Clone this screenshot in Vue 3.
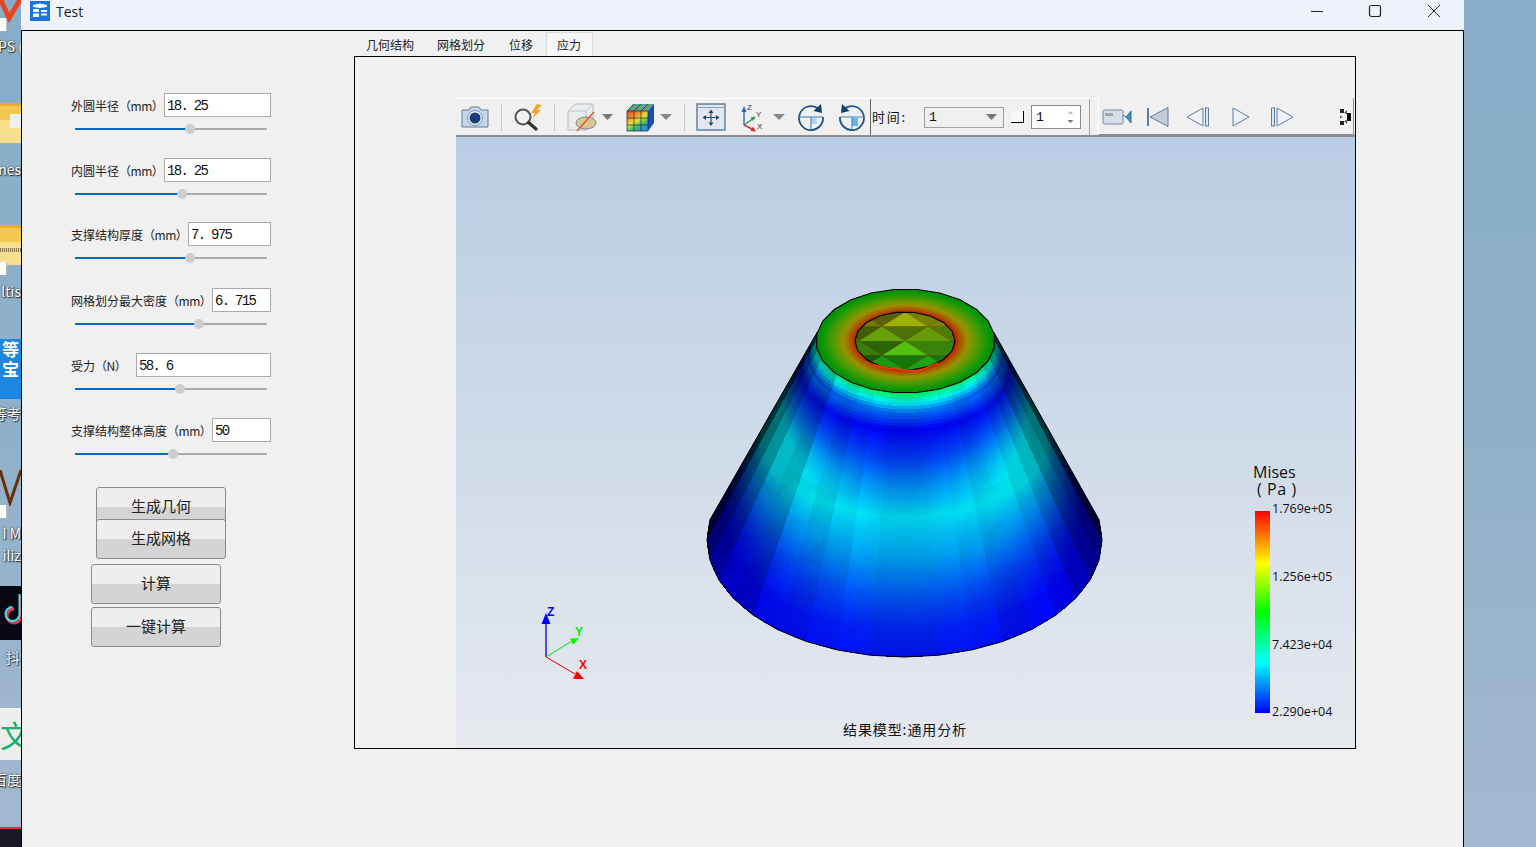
<script setup>
const fields = [
  { label: "外圆半径", unit: "（mm）", value: "18. 25", inputW: 107, handle: 115 },
  { label: "内圆半径", unit: "（mm）", value: "18. 25", inputW: 107, handle: 107 },
  { label: "支撑结构厚度", unit: "（mm）", value: "7. 975", inputW: 83, handle: 115 },
  { label: "网格划分最大密度", unit: "（mm）", value: "6. 715", inputW: 59, handle: 124 },
  { label: "受力", unit: "（N）", value: "58. 6", inputW: 135, handle: 105 },
  { label: "支撑结构整体高度", unit: "（mm）", value: "50", inputW: 59, handle: 98 },
];
const tabs = ["几何结构", "网格划分", "位移", "应力"];

const legendLabels = ["1.769e+05", "1.256e+05", "7.423e+04", "2.290e+04"];

// jet colour scale, v from 0 to 1
function jet(v) {
  v = Math.max(0, Math.min(1, v));
  let r = 0, g = 0, b = 0;
  if (v < 0.25) { g = v / 0.25; b = 1; }
  else if (v < 0.5) { g = 1; b = 1 - (v - 0.25) / 0.25; }
  else if (v < 0.75) { r = (v - 0.5) / 0.25; g = 1; }
  else { r = 1; g = 1 - (v - 0.75) / 0.25; }
  return [r, g, b];
}

function lerpTable(table, t) {
  for (let i = 1; i < table.length; i++) {
    if (t <= table[i][0]) {
      const k = (t - table[i - 1][0]) / (table[i][0] - table[i - 1][0]);
      return table[i - 1][1] + k * (table[i][1] - table[i - 1][1]);
    }
  }
  return table[table.length - 1][1];
}

const centerTable = [
  [0, 0.42], [0.03, 0.29], [0.08, 0.1], [0.14, 0], [0.25, 0.06], [0.35, 0.14],
  [0.47, 0.225], [0.62, 0.17], [0.77, 0.09], [0.9, 0.035], [1, 0.02],
];

function hash(a, b) {
  const s = Math.sin(a * 127.1 + b * 311.7) * 43758.5453;
  return s - Math.floor(s);
}

function rgb(c, s) {
  return "rgb(" + c.map((x) => Math.round(Math.min(1, x * s) * 255)).join(",") + ")";
}

// cone seen from above, angle 0 is the front of the cone
function conePoint(th, t) {
  const cx = 905.5 - t;
  const cy = 341 + t * 199;
  const rx = 89.5 + t * 108;
  const ry = 52 + t * 65;
  return [cx + rx * Math.sin(th), cy + ry * Math.cos(th)];
}

const deg = Math.PI / 180;
const edge = 100 * deg;
const coneCells = [];
const thStep = 2.5 * deg;
const tStep = 0.0125;
for (let i = -40; i < 40; i++) {
  for (let j = 0; j < 80; j++) {
    const th = i * thStep;
    const t = j * tStep;
    const thMid = th + thStep / 2;
    const tMid = t + tStep / 2;
    const a = Math.min(1, Math.abs(Math.sin(thMid)));
    let v = lerpTable(centerTable, tMid);
    // the cyan area spreads upward along the sides
    v += a * a * 0.12 * Math.exp(-Math.pow((tMid - 0.34) / 0.15, 2));
    v -= a * a * 0.07 * Math.exp(-Math.pow((tMid - 0.75) / 0.25, 2));
    if (tMid > 0.1) v = Math.min(v, 0.235);
    if (tMid < 0.08) v -= a * 0.07;
    const fi = Math.floor(thMid / (10 * deg));
    const fj = Math.floor(tMid * 7);
    const upper = (thMid / (10 * deg) - fi) + (tMid * 7 - fj) > 1 ? 1 : 0;
    const facetTh = (fi + 0.5) * 10 * deg;
    const c = Math.max(0, Math.cos(facetTh));
    let shade = 0.2 + 0.8 * Math.pow(c, 0.5);
    // each strip of faces has its own brightness
    shade *= 0.92 + 0.16 * hash(fi, 7) * Math.min(1, a * 1.6);
    shade *= 0.97 + 0.06 * hash(fi + upper * 3, fj) * Math.min(1, a * 1.6);
    coneCells.push({
      key: i + "_" + j,
      order: Math.abs(thMid),
      fill: rgb(jet(v), shade),
      points: [conePoint(th, t), conePoint(th + thStep, t), conePoint(th + thStep, t + tStep), conePoint(th, t + tStep)]
        .map((p) => p[0].toFixed(1) + "," + p[1].toFixed(1)).join(" "),
    });
  }
}
coneCells.sort((p, q) => q.order - p.order);

function ellipsePoints(cx, cy, rx, ry, n, phase) {
  const out = [];
  for (let i = 0; i < n; i++) {
    const th = phase + (i * 2 * Math.PI) / n;
    out.push(cx + rx * Math.sin(th) + "," + (cy + ry * Math.cos(th)));
  }
  return out.join(" ");
}
const ringOuter = ellipsePoints(905.5, 341, 89.5, 52, 24, 0.13);
const holePts = ellipsePoints(905, 341, 50, 29, 18, 0.17);

// outline of bottom and slanted sides
const outlinePts = [];
for (let d = -100; d <= 100; d += 10) {
  const p = conePoint(d * deg + 0, 1);
  outlinePts.push(p[0].toFixed(1) + "," + p[1].toFixed(1));
}
const leftTop = conePoint(-edge, 0);
const rightTop = conePoint(edge, 0);
const coneOutline = leftTop.join(",") + " " + outlinePts.join(" ") + " " + rightTop.join(",");

// diamonds seen through the hole
const holeTris = [];
const dx = 46;
const dy = 14.5;
for (let r = 0; r < 5; r++) {
  const y0 = 312 + r * dy;
  const off = r % 2 ? dx / 2 : 0;
  for (let k = -3; k <= 3; k++) {
    const x0 = 905 + k * dx + off;
    const m = (r + 0.5) / 4;
    const side = 1 - Math.min(0.35, Math.abs(x0 - 905) / 150);
    const base = [0.62 - Math.min(1, m) * 0.58, 0.62, 0.02 + Math.min(1, m) * 0.05];
    holeTris.push({
      key: "u" + r + k,
      points: `${x0},${y0} ${x0 + dx / 2},${y0 + dy} ${x0 - dx / 2},${y0 + dy}`,
      fill: rgb(base, (1.12 + 0.12 * hash(r, k)) * side),
    });
    holeTris.push({
      key: "d" + r + k,
      points: `${x0},${y0} ${x0 + dx},${y0} ${x0 + dx / 2},${y0 + dy}`,
      fill: rgb(base, (0.82 + 0.12 * hash(k, r)) * side),
    });
  }
}
</script>

<template>
  <div class="desktop">
    <div class="desk-icons">
      <svg class="desk-v" width="21" height="24" viewBox="0 0 21 24"><path d="M0 0 L9 20 L21 0" fill="none" stroke="#ea4320" stroke-width="5" /></svg>
      <span class="shortcut s1"></span>
      <span class="desk-text t1">PS (</span>
      <span class="folder f1"><i class="paper"></i></span>
      <span class="desk-text t2">nes</span>
      <span class="folder f2"><i class="zip"></i></span>
      <span class="shortcut s2"></span>
      <span class="desk-text t3">ltis</span>
      <span class="blue-tile">等<br />宝</span>
      <span class="desk-text t4">等考</span>
      <svg class="desk-brown" width="21" height="36" viewBox="0 0 21 36"><path d="M0 0 L10 33 L21 0" fill="none" stroke="#6b2f08" stroke-width="3" /></svg>
      <span class="shortcut s3"></span>
      <span class="desk-text t5">I M</span>
      <span class="desk-text t6">iliz</span>
      <span class="tiktok">
        <svg width="21" height="54" viewBox="0 0 21 54"><path d="M21 10 V30 a7 7 0 1 1 -7 -7" fill="none" stroke="#f0355a" stroke-width="3" /><path d="M19.500 8 V28 a7 7 0 1 1 -7 -7" fill="none" stroke="#3fe6e6" stroke-width="2" /></svg>
      </span>
      <span class="desk-text t7">抖</span>
      <span class="wen-tile">文</span>
      <span class="desk-text t8">百度</span>
      <span class="dark-tile"></span>
    </div>

    <div class="window">
      <header class="titlebar">
        <svg class="app-icon" width="20" height="20" viewBox="0 0 20 20">
          <rect width="20" height="20" fill="#1a73e0" />
          <path d="M3 4 L10 2.500 L17 4 V6 L10 7 L3 6 Z M3 8 H9 V11 H3 Z M3 12.500 H9 V16 H3 Z M11 9 H17 V11 H11 Z M11 12.500 H17 V14.500 H11 Z" fill="#fff" />
        </svg>
        <span class="title">Test</span>
        <div class="win-controls">
          <svg width="14" height="14" viewBox="0 0 14 14"><path d="M1 7.500 H13" stroke="#222" /></svg>
          <svg width="14" height="14" viewBox="0 0 14 14"><rect x="1.500" y="1.500" width="11" height="11" rx="2" fill="none" stroke="#222" stroke-width="1.200" /></svg>
          <svg class="win-close" width="14" height="14" viewBox="0 0 14 14"><path d="M1 1 L13 13 M13 1 L1 13" stroke="#222" /></svg>
        </div>
      </header>

      <div class="body">
        <aside class="panel">
          <div v-for="f in fields" :key="f.label" class="field">
            <div class="field-top">
              <label class="field-label">{{ f.label }}<span class="unit">{{ f.unit }}</span></label>
              <input class="field-input" :value="f.value" :style="{ width: f.inputW + 'px' }" />
            </div>
            <div class="slider">
              <div class="slider-fill" :style="{ width: f.handle + 'px' }"></div>
              <div class="slider-handle" :style="{ left: f.handle + 'px' }"></div>
            </div>
          </div>
          <button class="btn btn-a">生成几何</button>
          <button class="btn btn-a overlap">生成网格</button>
          <button class="btn btn-b calc">计算</button>
          <button class="btn btn-b all">一键计算</button>
        </aside>

        <main class="main">
          <nav class="tabs">
            <div v-for="t in tabs" :key="t" class="tab" :class="{ active: t === '应力' }">{{ t }}</div>
          </nav>
          <section class="frame">
            <div class="viewer">
              <div class="toolbar">
                <svg class="ml4" width="30" height="24" viewBox="0 0 30 24">
                  <path d="M2 5 H9 L11 2 H19 L21 5 H28 V22 H2 Z" fill="#c6d6e6" stroke="#5f7fa0" stroke-linejoin="round" />
                  <circle cx="15" cy="13" r="7.500" fill="#e6eef6" stroke="#7c98b4" />
                  <circle cx="15" cy="13" r="5.500" fill="#1c3c78" />
                </svg>
                <span class="sep ml11"></span>
                <svg class="ml10" width="32" height="28" viewBox="0 0 32 28">
                  <circle cx="11" cy="14" r="7.500" fill="#eef2f4" stroke="#555" stroke-width="2" />
                  <path d="M16.500 19.500 L24 26" stroke="#333" stroke-width="3.200" stroke-linecap="round" />
                  <path d="M25 1 L19 10 H23 L20 16 L29 7 H25 L30 2 Z" fill="#f2a524" />
                </svg>
                <span class="sep ml10"></span>
                <svg class="ml11" width="31" height="30" viewBox="0 0 31 30">
                  <path d="M2 9 L9 2 H27 V20 L20 28 H2 Z" fill="#e9ecef" stroke="#b4bcc4" />
                  <path d="M2 9 H20 V28 M20 9 L27 2" fill="none" stroke="#c0c6cc" />
                  <ellipse cx="20" cy="21" rx="10" ry="6" fill="#d9c690" stroke="#7a8894" />
                  <path d="M11 29 L28 10" stroke="#d5552a" stroke-width="1.200" />
                </svg>
                <svg class="ml5" width="11" height="7" viewBox="0 0 11 7"><path d="M0 0 H11 L5.500 6 Z" fill="#777" /></svg>
                <svg class="ml12" width="30" height="29" viewBox="0 0 30 29">
                  <defs>
                    <linearGradient id="cubeFace" x1="0" y1="0" x2="0.6" y2="1">
                      <stop offset="0" stop-color="#e0392a" />
                      <stop offset="0.35" stop-color="#f0a024" />
                      <stop offset="0.55" stop-color="#e4e03a" />
                      <stop offset="0.78" stop-color="#3fc46a" />
                      <stop offset="1" stop-color="#2f8fe0" />
                    </linearGradient>
                  </defs>
                  <path d="M8 1 H29 L23 8 H2 Z" fill="#5fa08a" />
                  <path d="M23 8 L29 1 V20 L23 28 Z" fill="#1a4fb0" />
                  <rect x="2" y="8" width="21" height="20" fill="url(#cubeFace)" />
                  <path d="M2 8 H23 V28 H2 Z M9 8 V28 M16 8 V28 M2 15 H23 M2 22 H23 M9 1 L2 8 M16 1 L9 8 M23 1 L16 8" fill="none" stroke="#223" stroke-width="0.700" />
                </svg>
                <svg class="ml5" width="12" height="7" viewBox="0 0 12 7"><path d="M0 0 H12 L6 6 Z" fill="#888" /></svg>
                <span class="sep ml12"></span>
                <svg class="ml11" width="30" height="28" viewBox="0 0 30 28">
                  <rect x="1" y="1" width="28" height="26" fill="#e3e6ec" stroke="#62809f" stroke-width="1.500" />
                  <path d="M1 4.500 H29" stroke="#8aa0b8" />
                  <path d="M15 8 V21 M9 14.500 H21" stroke="#2d4f78" stroke-width="1.200" />
                  <path d="M15 6.500 L12.500 10 H17.500 Z M15 23 L12.500 19.500 H17.500 Z M6.500 14.500 L10 12 V17 Z M23.500 14.500 L20 12 V17 Z" fill="#24466f" />
                </svg>
                <svg class="ml15" width="26" height="30" viewBox="0 0 26 30">
                  <path d="M3 8 V23" stroke="#2a62c4" stroke-width="1.400" />
                  <path d="M3 4 L0.500 10 H5.500 Z" fill="#2a62c4" />
                  <path d="M3 23 L13 16" stroke="#2a9a4c" stroke-width="1.400" />
                  <path d="M15 14.500 L9.500 15.500 L12 19 Z" fill="#2a9a4c" />
                  <path d="M3 23 L13 28" stroke="#d83030" stroke-width="1.400" />
                  <path d="M15 29.500 L9.500 29 L12 24.500 Z" fill="#d83030" />
                  <text x="6" y="8" class="axis-small">Z</text>
                  <text x="15" y="15" class="axis-small">Y</text>
                  <text x="16" y="27" class="axis-small">X</text>
                </svg>
                <svg class="ml6" width="12" height="7" viewBox="0 0 12 7"><path d="M0 0 H12 L6 6 Z" fill="#888" /></svg>
                <svg class="ml12" width="28" height="28" viewBox="0 0 28 28">
                  <path d="M14 15 H20 V21 H14 Z" fill="#b5d4ee" />
                  <path d="M20.500 5 A12 12 0 1 0 26 14" fill="none" stroke="#23527f" stroke-width="1.800" />
                  <path d="M2 14 H26 M14 14 V26" stroke="#3a80b4" stroke-width="1" />
                  <path d="M24 1 L25 10 L16.500 8 Z" fill="#183f68" />
                </svg>
                <svg class="ml13" width="28" height="28" viewBox="0 0 28 28">
                  <path d="M14 15 H20 V23 H14 Z" fill="#6fb4e8" />
                  <path d="M7.500 5 A12 12 0 1 1 2 14" fill="none" stroke="#23527f" stroke-width="1.800" />
                  <path d="M2 14 H26 M14 14 V26" stroke="#3a80b4" stroke-width="1" />
                  <path d="M4 1 L3 10 L11.500 8 Z" fill="#183f68" />
                </svg>
                <span class="sep dark ml4"></span>
                <span class="time-label">时间:</span>
                <div class="combo">
                  <span>1</span>
                  <svg width="11" height="6" viewBox="0 0 11 6"><path d="M0 0 H11 L5.500 6 Z" fill="#777" /></svg>
                </div>
                <span class="check"></span>
                <div class="spin">
                  <span>1</span>
                  <svg width="7" height="14" viewBox="0 0 7 14"><path d="M3.500 1 L6.500 4 H0.500 Z" fill="#c0c0c0" /><path d="M3.500 13 L6.500 10 H0.500 Z" fill="#777" /></svg>
                </div>
                <span class="sep gray ml8"></span>
                <div class="player">
                  <svg class="ml3" width="30" height="18" viewBox="0 0 30 18">
                    <rect x="1" y="2" width="20" height="14" rx="1.500" fill="#d7dee6" stroke="#6f8aa6" />
                    <rect x="3" y="5" width="8" height="3" fill="#9aa8b6" />
                    <path d="M21 7 L24 9 L29 3 V15 L24 9" fill="#3d92c4" stroke="#2e6f9c" />
                  </svg>
                  <svg class="ml14" width="23" height="22" viewBox="0 0 23 22">
                    <path d="M2 2 V20" stroke="#5d7da0" stroke-width="2" />
                    <path d="M22 1.500 V20.500 L4 11 Z" fill="#c4ccd6" stroke="#5d7da0" />
                  </svg>
                  <svg class="ml17" width="24" height="22" viewBox="0 0 24 22">
                    <path d="M17 2 V20 L1 11 Z" fill="#eef1f5" stroke="#5d7da0" />
                    <rect x="19.500" y="2" width="3" height="18" fill="#dde4ec" stroke="#5d7da0" />
                  </svg>
                  <svg class="ml21" width="20" height="22" viewBox="0 0 20 22">
                    <path d="M2 2 V20 L18 11 Z" fill="#eef1f5" stroke="#5d7da0" />
                  </svg>
                  <svg class="ml19" width="24" height="22" viewBox="0 0 24 22">
                    <rect x="1.500" y="2" width="3" height="18" fill="#dde4ec" stroke="#5d7da0" />
                    <path d="M7 2 V20 L23 11 Z" fill="#eef1f5" stroke="#5d7da0" />
                  </svg>
                  <svg class="ml45" width="12" height="20" viewBox="0 0 12 20">
                    <rect width="12" height="20" fill="#f4f4f4" />
                    <path d="M1 2 H5 V6 H1 Z M1 14 H5 V18 H1 Z" fill="#222" />
                    <path d="M5 6 L8 3 V7 Z M5 14 L8 17 V13 Z" fill="#555" />
                    <path d="M1 8.500 L4 10 L1 11.500 Z" fill="#666" />
                    <rect x="8" y="6" width="4" height="8" fill="#000" />
                  </svg>
                </div>
              </div>

              <div class="canvas">
                <svg class="scene" viewBox="456 137 899 611" width="899" height="611">
                  <defs>
                    <radialGradient id="ringGrad">
                      <stop offset="0.56" stop-color="#b81c00" />
                      <stop offset="0.6" stop-color="#b04800" />
                      <stop offset="0.7" stop-color="#989200" />
                      <stop offset="0.82" stop-color="#4a9c04" />
                      <stop offset="0.95" stop-color="#069606" />
                      <stop offset="1" stop-color="#049004" />
                    </radialGradient>
                    <clipPath id="holeClip"><polygon :points="holePts" /></clipPath>
                  </defs>
                  <polygon :points="coneOutline" fill="#0020c0" />
                  <g shape-rendering="crispEdges">
                    <polygon v-for="c in coneCells" :key="c.key" :points="c.points" :fill="c.fill" />
                  </g>
                  <polyline :points="coneOutline" fill="none" stroke="#000" stroke-width="1" />
                  <polygon :points="ringOuter" fill="url(#ringGrad)" stroke="#000" stroke-width="1.100" />
                  <g clip-path="url(#holeClip)">
                    <polygon v-for="h in holeTris" :key="h.key" :points="h.points" :fill="h.fill" />
                  </g>
                  <polygon :points="holePts" fill="none" stroke="#000" stroke-width="1.100" />
                  <polyline points="874,365 890,368.500 918,371 938,363" fill="none" stroke="#ff3c00" stroke-width="1.300" />

                  <path d="M546 657 V620" stroke="#0000e0" stroke-width="1.300" />
                  <path d="M546 613 L541.500 624 H550.500 Z" fill="#0000ff" />
                  <path d="M546 657 L572 641" stroke="#00e000" stroke-width="1" />
                  <path d="M579 638 L570 638.500 L573 645 Z" fill="#00ff00" />
                  <path d="M546 657 L575 674" stroke="#e00000" stroke-width="1" />
                  <path d="M584 679 L573 679 L577 671 Z" fill="#ff0000" />
                  <text x="547" y="616" class="axis z">Z</text>
                  <text x="575" y="636" class="axis y">Y</text>
                  <text x="579" y="669" class="axis x">X</text>
                </svg>
                <div class="legend">
                  <div class="legend-title">Mises<br /><span class="pa">( Pa )</span></div>
                  <div class="legend-bar"></div>
                  <span v-for="(l, i) in legendLabels" :key="l" class="legend-label" :class="'l' + i">{{ l }}</span>
                </div>
                <div class="caption">结果模型:通用分析</div>
              </div>
            </div>
          </section>
        </main>
      </div>
    </div>
  </div>
</template>

<style>
html, body {
  margin: 0;
  overflow: hidden;
}
</style>

<style scoped>
.desktop {
  position: relative;
  width: 1536px;
  height: 847px;
  overflow: hidden;
  background: linear-gradient(180deg, #88adc8 0%, #8fb0ca 50%, #a4b8cf 100%);
  font-family: "Noto Sans CJK SC", "Liberation Sans", sans-serif;
}
.desk-icons {
  position: absolute;
  left: 0;
  top: 0;
  width: 21px;
  height: 847px;
  overflow: hidden;
}
.desk-icons > * {
  position: absolute;
}
.desk-text {
  color: #fff;
  font-size: 14px;
  line-height: 18px;
  white-space: nowrap;
  right: 0;
  text-shadow: 0 0 2px #222, 1px 1px 1px #333;
}
.t1 { top: 37px; right: auto; left: -2px; }
.t2 { top: 160px; }
.t3 { top: 282px; }
.t4 { top: 404px; }
.t5 { top: 524px; }
.t6 { top: 546px; }
.t7 { top: 648px; right: 1px; }
.t8 { top: 770px; }
.desk-v { top: -2px; left: 0; }
.shortcut {
  left: 0;
  width: 6px;
  height: 13px;
  background: #fff;
  border-right: 1px solid #bbb;
}
.shortcut.s1 { top: 18px; }
.shortcut.s2 { top: 262px; }
.shortcut.s3 { top: 505px; }
.folder {
  left: 0;
  width: 21px;
  height: 37px;
  background: linear-gradient(180deg, #f3c850 0 14px, #f8df8e 14px 100%);
  border-top: 3px solid #e8ad30;
}
.paper {
  position: absolute;
  right: 0;
  top: 8px;
  width: 11px;
  height: 14px;
  background: #eeeeea;
}
.zip {
  position: absolute;
  left: 0;
  right: 0;
  top: 20px;
  height: 4px;
  background: repeating-linear-gradient(90deg, #8a7a50 0 1px, #e0d0a0 1px 2px);
}
.f1 { top: 103px; }
.f2 { top: 225px; }
.blue-tile {
  top: 339px;
  left: 0;
  width: 21px;
  height: 60px;
  background: #1c86e0;
  color: #fff;
  font-size: 17px;
  font-weight: 700;
  line-height: 20px;
  text-align: center;
}
.desk-brown { top: 470px; left: 0; }
.tiktok {
  top: 586px;
  left: 0;
  width: 21px;
  height: 54px;
  background: #070812;
}
.wen-tile {
  top: 708px;
  left: 0;
  width: 21px;
  height: 52px;
  background: #ecefec;
  color: #18b070;
  font-size: 30px;
  line-height: 52px;
  overflow: hidden;
}
.dark-tile {
  top: 827px;
  left: 0;
  width: 21px;
  height: 20px;
  background: #1a1a22;
  border-top: 2px solid #e03040;
}
.window {
  position: relative;
  margin-left: 21px;
  width: 1443px;
  height: 847px;
  display: flex;
  flex-direction: column;
  box-sizing: border-box;
  background: #f0f0f0;
}
.titlebar {
  height: 30px;
  flex: none;
  display: flex;
  align-items: flex-start;
  background: #eef3fb;
  border-bottom: 1px solid #000;
}
.app-icon {
  margin: 1px 0 0 9px;
}
.title {
  margin-left: 6px;
  font-family: "Open Sans", "Liberation Sans", sans-serif;
  font-size: 14px;
  line-height: 23px;
  color: #222;
}
.win-controls {
  margin-left: auto;
  margin-right: 23px;
  margin-top: 4px;
  display: flex;
  gap: 44px;
}
.win-close {
  margin-left: 1px;
}
.body {
  flex: 1;
  display: flex;
  border-left: 1px solid #000;
  border-right: 1px solid #000;
}
.panel {
  width: 332px;
  flex: none;
  box-sizing: border-box;
  padding: 62px 0 0 49px;
  display: flex;
  flex-direction: column;
  align-items: flex-start;
}
.field {
  width: 200px;
  height: 65px;
}
.field:nth-child(2) { height: 64px; }
.field:nth-child(3) { height: 66px; }
.field-top {
  display: flex;
  justify-content: space-between;
  align-items: center;
  height: 24px;
}
.field-label {
  font-size: 12px;
  color: #222;
  white-space: nowrap;
}
.unit {
  letter-spacing: -0.5px;
}
.field-input {
  box-sizing: border-box;
  height: 24px;
  padding: 1px 2px 0;
  border: 1px solid #a9a9a9;
  background: #fff;
  border-radius: 0;
  outline: none;
  font-family: "Liberation Mono", monospace;
  font-size: 14px;
  letter-spacing: -1.7px;
  color: #111;
}
.slider {
  position: relative;
  margin: 11px 0 0 4px;
  width: 192px;
  height: 2px;
  background: #ababab;
}
.slider-fill {
  height: 2px;
  background: #0a69bd;
}
.slider-handle {
  position: absolute;
  top: -4px;
  width: 10px;
  height: 10px;
  margin-left: -5px;
  border-radius: 50%;
  background: #cdcdcd;
}
.btn {
  width: 130px;
  height: 40px;
  padding: 0 0 3px;
  box-sizing: border-box;
  border: 1px solid #8b8b8b;
  border-radius: 3px;
  background: linear-gradient(180deg, #eeeeee 50%, #d4d4d4 50%);
  font-family: "Noto Sans CJK SC", sans-serif;
  font-size: 15px;
  color: #222;
}
.btn-a {
  margin-left: 25px;
  margin-top: 4px;
}
.btn-a.overlap {
  margin-top: -8px;
}
.btn-b {
  margin-left: 20px;
}
.calc { margin-top: 5px; }
.all { margin-top: 3px; }
.main {
  flex: 1;
  display: flex;
  flex-direction: column;
  min-width: 0;
}
.tabs {
  display: flex;
  height: 25px;
  padding-left: 0.5px;
}
.tab {
  padding: 0 11.5px;
  font-size: 12px;
  line-height: 28px;
  color: #222;
}
.tab:nth-child(3) { margin: 0 1px; }
.tab.active {
  margin-top: 1px;
  background: #f6f6f6;
  border: 1px solid #dcdcdc;
  border-bottom: none;
  box-sizing: border-box;
  padding: 0 10.5px;
  line-height: 23px;
}
.frame {
  box-sizing: border-box;
  width: 1002px;
  height: 693px;
  border: 1px solid #000;
  padding: 41px 0 0 101px;
  background: #f0f0f0;
}
.viewer {
  height: 100%;
  display: flex;
  flex-direction: column;
}
.toolbar {
  height: 39px;
  flex: none;
  box-sizing: border-box;
  display: flex;
  align-items: center;
  background: #f0f0f0;
  border-top: 1px solid #fff;
  border-bottom: 2px solid #8e8e8e;
}
.toolbar > svg, .player > svg {
  flex: none;
}
.sep {
  width: 1px;
  height: 27px;
  background: #c8c8c8;
  flex: none;
}
.sep.dark {
  height: 36px;
  background: #666;
}
.sep.gray {
  height: 36px;
  background: #a0a0a0;
}
.ml3 { margin-left: 3px; }
.ml4 { margin-left: 4px; }
.ml5 { margin-left: 5px; }
.ml6 { margin-left: 6px; }
.ml8 { margin-left: 8px; }
.ml10 { margin-left: 10px; }
.ml11 { margin-left: 11px; }
.ml12 { margin-left: 12px; }
.ml13 { margin-left: 13px; }
.ml14 { margin-left: 14px; }
.ml15 { margin-left: 15px; }
.ml17 { margin-left: 17px; }
.ml19 { margin-left: 19px; }
.ml21 { margin-left: 21px; }
.ml45 { margin-left: 45px; }
.axis-small {
  font-family: "Liberation Sans", sans-serif;
  font-size: 8px;
  fill: #333;
}
.time-label {
  width: 38px;
  margin-left: 1px;
  margin-bottom: 2px;
  font-size: 13px;
  letter-spacing: 1.8px;
  color: #111;
  white-space: nowrap;
  flex: none;
}
.combo {
  width: 80px;
  height: 21px;
  margin-left: 14px;
  box-sizing: border-box;
  border: 1px solid #a0a0a0;
  display: flex;
  align-items: center;
  justify-content: space-between;
  padding: 0 6px 0 4px;
  background: #efefef;
  font-family: "Liberation Mono", monospace;
  font-size: 13px;
  color: #111;
  flex: none;
}
.check {
  width: 13px;
  height: 12px;
  margin-left: 7px;
  box-sizing: border-box;
  background: #f8f8f8;
  border-right: 1px solid #000;
  border-bottom: 1px solid #000;
  flex: none;
}
.spin {
  width: 50px;
  height: 24px;
  margin-left: 7px;
  box-sizing: border-box;
  border: 1px solid #8a8a8a;
  background: #fff;
  display: flex;
  align-items: center;
  justify-content: space-between;
  padding: 0 6px 0 4px;
  font-family: "Liberation Mono", monospace;
  font-size: 13px;
  color: #111;
  flex: none;
}
.player {
  width: 256px;
  height: 37px;
  margin-left: 8px;
  margin-top: -1px;
  padding-top: 2px;
  box-sizing: border-box;
  display: flex;
  align-items: center;
  background: #f0f0f0;
  border-left: 1px solid #fff;
  border-right: 1px solid #8e8e8e;
  border-bottom: 1px solid #8e8e8e;
  flex: none;
}
.canvas {
  position: relative;
  flex: 1;
  min-height: 0;
  background: linear-gradient(180deg, #b9cde4 0%, #e6e9ee 100%);
  overflow: hidden;
}
.scene {
  display: block;
}
.axis {
  font-family: "Liberation Sans", sans-serif;
  font-size: 12px;
  font-weight: 700;
}
.axis.z { fill: #0000ff; }
.axis.y { fill: #00ee00; }
.axis.x { fill: #ff0000; }
.legend {
  position: absolute;
  left: 797px;
  top: 327px;
  width: 90px;
  height: 260px;
  font-family: "Open Sans", "Liberation Sans", sans-serif;
  color: #111;
}
.legend-title {
  font-size: 16px;
  line-height: 17px;
}
.pa {
  margin-left: 4px;
  letter-spacing: 0.6px;
}
.legend-bar {
  position: absolute;
  left: 2px;
  top: 47px;
  width: 15px;
  height: 202px;
  background: linear-gradient(180deg, #f00 0%, #ff0 26%, #0f0 50%, #0ff 75%, #00f 100%);
}
.legend-label {
  position: absolute;
  left: 19px;
  font-size: 12.5px;
  line-height: 14px;
  white-space: nowrap;
}
.l0 { top: 38px; }
.l1 { top: 106px; }
.l2 { top: 174px; }
.l3 { top: 241px; }
.caption {
  position: absolute;
  left: 387px;
  top: 582px;
  font-size: 14px;
  letter-spacing: 0.9px;
  line-height: 20px;
  color: #111;
  white-space: nowrap;
}
</style>
